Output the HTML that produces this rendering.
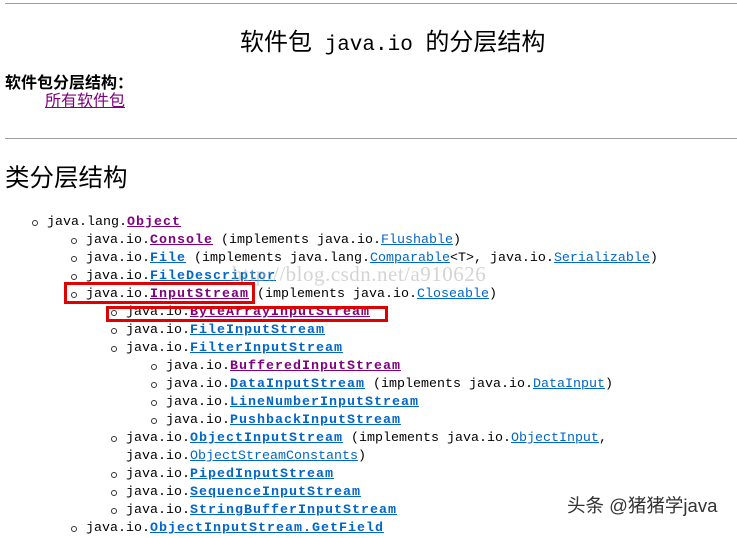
<!DOCTYPE html>
<html><head><meta charset="utf-8"><style>
body{margin:0;width:737px;height:532px;overflow:hidden;background:#fff;position:relative;font-family:"Liberation Sans","Noto Sans CJK SC",sans-serif;color:#000}
.hr{position:absolute;left:5px;right:0;height:1px;background:#a0a0a0}
.r{position:absolute;font:13.33px/18px "Liberation Mono","Noto Sans CJK SC",monospace;white-space:pre;margin-top:2px}
.r:before{content:"";position:absolute;left:-15px;top:6px;width:4px;height:4px;border:1.3px solid #333;border-radius:50%;background:#fff}
.r.nb:before{display:none}
a{text-decoration:underline}
.v{color:#800080;font-weight:bold;letter-spacing:1px}
.b{color:#0066cc;font-weight:bold;letter-spacing:1px}
.n{color:#0066cc}
.box{position:absolute;border:3px solid #e00000;box-sizing:border-box}
</style></head><body>
<div class="hr" style="top:3px"></div>
<div style="position:absolute;left:240px;top:28px;font-size:24px;line-height:30px;white-space:pre">软件包<span style="font:21px 'Liberation Mono',monospace"> java.io </span>的分层结构</div>
<div style="position:absolute;left:5px;top:75px;font-size:16px;font-weight:bold;line-height:18px">软件包分层结构：</div>
<div style="position:absolute;left:45px;top:93px;font-size:16px;line-height:18px"><a style="color:#800080">所有软件包</a></div>
<div class="hr" style="top:138px"></div>
<div style="position:absolute;left:5px;top:164px;font-size:24.5px;line-height:30px">类分层结构</div>

<div class="r" style="left:47px;top:212px">java.lang.<a class="v">Object</a></div>
<div class="r" style="left:86px;top:230px">java.io.<a class="v">Console</a> (implements java.io.<a class="n">Flushable</a>)</div>
<div class="r" style="left:86px;top:248px">java.io.<a class="b">File</a> (implements java.lang.<a class="n">Comparable</a>&lt;T&gt;, java.io.<a class="n">Serializable</a>)</div>
<div class="r" style="left:86px;top:266px">java.io.<a class="b">FileDescriptor</a></div>
<div class="r" style="left:86px;top:284px">java.io.<a class="v">InputStream</a> (implements java.io.<a class="n">Closeable</a>)</div>
<div class="r" style="left:126px;top:302px">java.io.<a class="v">ByteArrayInputStream</a></div>
<div class="r" style="left:126px;top:320px">java.io.<a class="b">FileInputStream</a></div>
<div class="r" style="left:126px;top:338px">java.io.<a class="b">FilterInputStream</a></div>
<div class="r" style="left:166px;top:356px">java.io.<a class="v">BufferedInputStream</a></div>
<div class="r" style="left:166px;top:374px">java.io.<a class="b">DataInputStream</a> (implements java.io.<a class="n">DataInput</a>)</div>
<div class="r" style="left:166px;top:392px">java.io.<a class="b">LineNumberInputStream</a></div>
<div class="r" style="left:166px;top:410px">java.io.<a class="b">PushbackInputStream</a></div>
<div class="r" style="left:126px;top:428px">java.io.<a class="b">ObjectInputStream</a> (implements java.io.<a class="n">ObjectInput</a>,</div>
<div class="r nb" style="left:126px;top:446px">java.io.<a class="n">ObjectStreamConstants</a>)</div>
<div class="r" style="left:126px;top:464px">java.io.<a class="b">PipedInputStream</a></div>
<div class="r" style="left:126px;top:482px">java.io.<a class="b">SequenceInputStream</a></div>
<div class="r" style="left:126px;top:500px">java.io.<a class="b">StringBufferInputStream</a></div>
<div class="r" style="left:86px;top:518px">java.io.<a class="b">ObjectInputStream.GetField</a></div>

<div style="position:absolute;left:232px;top:262px;font:21px/24px 'Liberation Serif',serif;color:rgba(170,170,170,0.5);letter-spacing:0.5px">http://blog.csdn.net/a910626</div>
<div class="box" style="left:64px;top:282px;width:191px;height:22px"></div>
<div class="box" style="left:106px;top:306px;width:282px;height:16px"></div>
<div style="position:absolute;left:567px;top:495px;font-size:18.5px;line-height:22px;color:#333;text-shadow:0 0 2px #fff,0 0 2px #fff">头条 @猪猪学java</div>
</body></html>
